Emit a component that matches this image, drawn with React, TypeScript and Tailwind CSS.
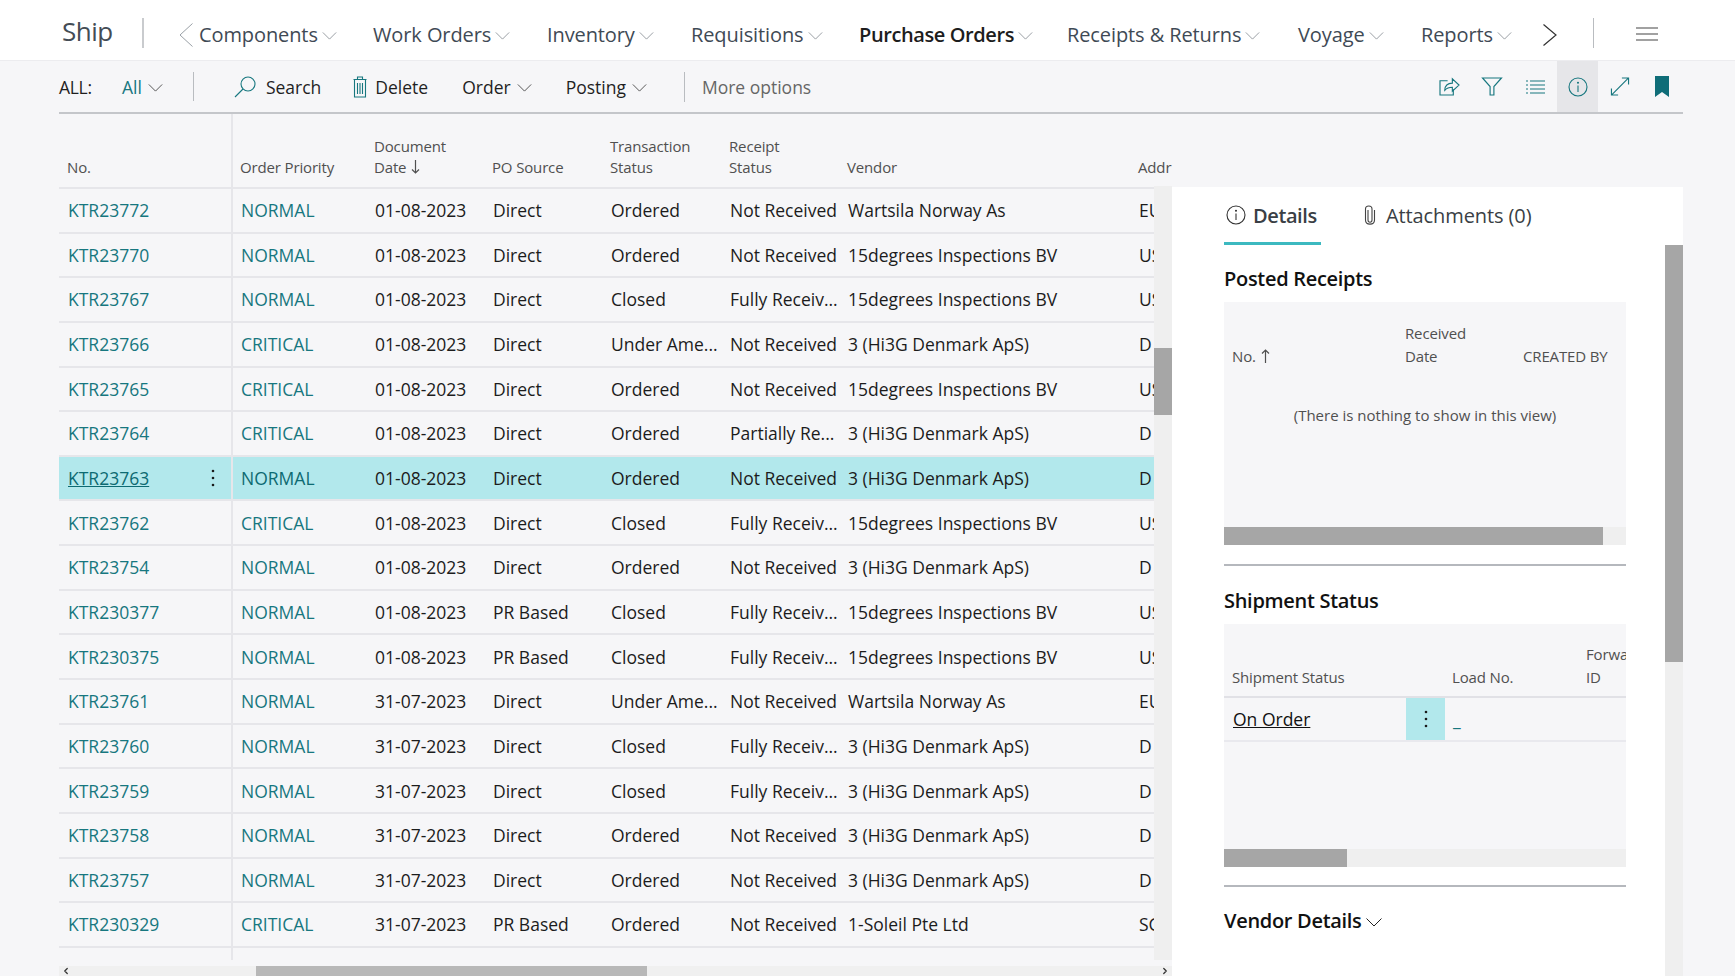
import { ChevronLeft, ChevronRight } from "lucide-react";

const TEAL = "text-[#17777f]";
const COLS = "grid grid-cols-[174px_134px_119px_118px_118px_118px_292px_1fr]";

const navItems = [
  { label: "Components", width: "w-[174px]" },
  { label: "Work Orders", width: "w-[174px]" },
  { label: "Inventory", width: "w-[144px]" },
  { label: "Requisitions", width: "w-[168px]" },
  { label: "Purchase Orders", width: "w-[208px]", active: true },
  { label: "Receipts & Returns", width: "w-[231px]" },
  { label: "Voyage", width: "w-[123px]" },
  { label: "Reports", width: "w-[122px]" },
];

const rows = [
  ["KTR23772", "NORMAL", "01-08-2023", "Direct", "Ordered", "Not Received", "Wartsila Norway As", "EU"],
  ["KTR23770", "NORMAL", "01-08-2023", "Direct", "Ordered", "Not Received", "15degrees Inspections BV", "US"],
  ["KTR23767", "NORMAL", "01-08-2023", "Direct", "Closed", "Fully Receiv...", "15degrees Inspections BV", "US"],
  ["KTR23766", "CRITICAL", "01-08-2023", "Direct", "Under Ame...", "Not Received", "3 (Hi3G Denmark ApS)", "D"],
  ["KTR23765", "CRITICAL", "01-08-2023", "Direct", "Ordered", "Not Received", "15degrees Inspections BV", "US"],
  ["KTR23764", "CRITICAL", "01-08-2023", "Direct", "Ordered", "Partially Re...", "3 (Hi3G Denmark ApS)", "D"],
  ["KTR23763", "NORMAL", "01-08-2023", "Direct", "Ordered", "Not Received", "3 (Hi3G Denmark ApS)", "D"],
  ["KTR23762", "CRITICAL", "01-08-2023", "Direct", "Closed", "Fully Receiv...", "15degrees Inspections BV", "US"],
  ["KTR23754", "NORMAL", "01-08-2023", "Direct", "Ordered", "Not Received", "3 (Hi3G Denmark ApS)", "D"],
  ["KTR230377", "NORMAL", "01-08-2023", "PR Based", "Closed", "Fully Receiv...", "15degrees Inspections BV", "US"],
  ["KTR230375", "NORMAL", "01-08-2023", "PR Based", "Closed", "Fully Receiv...", "15degrees Inspections BV", "US"],
  ["KTR23761", "NORMAL", "31-07-2023", "Direct", "Under Ame...", "Not Received", "Wartsila Norway As", "EU"],
  ["KTR23760", "NORMAL", "31-07-2023", "Direct", "Closed", "Fully Receiv...", "3 (Hi3G Denmark ApS)", "D"],
  ["KTR23759", "NORMAL", "31-07-2023", "Direct", "Closed", "Fully Receiv...", "3 (Hi3G Denmark ApS)", "D"],
  ["KTR23758", "NORMAL", "31-07-2023", "Direct", "Ordered", "Not Received", "3 (Hi3G Denmark ApS)", "D"],
  ["KTR23757", "NORMAL", "31-07-2023", "Direct", "Ordered", "Not Received", "3 (Hi3G Denmark ApS)", "D"],
  ["KTR230329", "CRITICAL", "31-07-2023", "PR Based", "Ordered", "Not Received", "1-Soleil Pte Ltd", "SG"],
];

function Chevron({ className = "" }: { className?: string }) {
  return (
    <svg viewBox="0 0 16 9" fill="none" stroke="currentColor" strokeWidth="1" className={className}>
      <path d="M0.5 0.5 8 8 15.5 0.5" />
    </svg>
  );
}

function SortArrow({ up = false }: { up?: boolean }) {
  return (
    <svg viewBox="0 0 9 14" fill="none" stroke="#505050" strokeWidth="1.2" className="w-[9px] h-[14px] inline-block ml-[5px] align-[-1px]">
      <path d={up ? "M4.5 14V1M1 4.5 4.5 1 8 4.5" : "M4.5 0v13M1 9.5 4.5 13 8 9.5"} />
    </svg>
  );
}

function Kebab() {
  return (
    <svg viewBox="0 0 4 18" className="w-[4px] h-[18px]" fill="#1a1a1a">
      <circle cx="2" cy="2" r="1.3" />
      <circle cx="2" cy="9" r="1.3" />
      <circle cx="2" cy="16" r="1.3" />
    </svg>
  );
}

function InfoIcon({ className = "" }: { className?: string }) {
  return (
    <svg viewBox="0 0 20 20" fill="none" stroke="currentColor" strokeWidth="1.1" className={className}>
      <circle cx="10" cy="10" r="9" />
      <path d="M10 8.500V15" />
      <circle cx="10" cy="5.800" r="0.500" />
    </svg>
  );
}

function Toolbar() {
  return (
    <div className="h-[51px] shrink-0 ml-[59px] mr-[52px] flex items-center text-[17.5px] text-[#1f1f1f] [&>span]:mt-[2px]">
      <span className="w-[63px] font-medium tracking-[-0.3px]">ALL:</span>
      <span className={`${TEAL} font-medium`}>All</span>
      <Chevron className="w-[15px] h-[8px] ml-[6px] mt-[2px] text-[#444]" />
      <div className="w-px h-[29px] bg-[#b9bcc0] ml-[30px] mr-[40px]" />
      <svg viewBox="0 0 22 22" fill="none" stroke="#17777f" strokeWidth="1.1" className="w-[22px] h-[22px]">
        <circle cx="14" cy="8" r="7" />
        <path d="M9 13 1 21" />
      </svg>
      <span className="ml-[10px]">Search</span>
      <svg viewBox="0 0 14 22" fill="none" stroke="#17777f" strokeWidth="1.1" className="w-[14px] h-[22px] ml-[32px]">
        <path d="M0.500 3.500h13M4.500 3.500V1h5v2.500M1.500 3.500V21h11V3.500M4.500 7v11M7 7v11M9.500 7v11" />
      </svg>
      <span className="ml-[8px]">Delete</span>
      <span className="ml-[34px]">Order</span>
      <Chevron className="w-[15px] h-[8px] ml-[6px] mt-[2px] text-[#444]" />
      <span className="ml-[34px]">Posting</span>
      <Chevron className="w-[15px] h-[8px] ml-[6px] mt-[2px] text-[#444]" />
      <div className="w-px h-[30px] bg-[#b9bcc0] ml-[37px] mr-[17px]" />
      <span className="text-[#666]">More options</span>

      <div className="ml-auto flex items-center h-full text-[#17777f]">
        <svg viewBox="0 0 22 20" fill="none" stroke="currentColor" strokeWidth="1.2" className="w-[21px] h-[19px] mr-[21px]">
          <path d="M9 4H1v15h14v-6" />
          <path d="M6 14c0-5 3-7.500 8-7.500V2l7 6.500-7 6.500v-4.200c-3 0-6 1-8 3.200z" />
        </svg>
        <svg viewBox="0 0 22 20" fill="none" stroke="currentColor" strokeWidth="1.2" className="w-[22px] h-[19px] mr-[23px]">
          <path d="M1 1h20l-8 9v9H9v-9z" />
        </svg>
        <svg viewBox="0 0 19 14" fill="none" stroke="currentColor" strokeWidth="1.2" className="w-[19px] h-[14px] mr-[12px]">
          <path d="M0 1h2M4 1h15M0 5h2M4 5h15M0 9h2M4 9h15M0 13h2M4 13h15" />
        </svg>
        <div className="w-[41px] h-full bg-[#e6e6e9] flex items-center justify-center">
          <InfoIcon className="w-[20px] h-[20px]" />
        </div>
        <svg viewBox="0 0 20 20" fill="none" stroke="currentColor" strokeWidth="1.2" className="w-[20px] h-[19px] ml-[12px] mr-[25px]">
          <path d="M1 19 19 1M12 1h7v7M1 12v7h7" />
        </svg>
        <svg viewBox="0 0 14 21" className="w-[14px] h-[21px] mr-[14px]" fill="#0f6d78">
          <path d="M0 0h14v21l-7-5-7 5z" />
        </svg>
      </div>
    </div>
  );
}

function GridTable() {
  return (
    <div className="w-[1113px] shrink-0 flex flex-col">
      <div className={`${COLS} h-[75px] text-[15px] leading-[21px] tracking-[-0.15px] text-[#505050]`}>
        <div className="flex items-end pb-[10px] pl-[8px] border-r-2 border-[#e6e6ea]">No.</div>
        <div className="flex items-end pb-[10px] pl-[7px]">Order Priority</div>
        <div className="flex items-end pb-[10px] pl-[7px]">
          <span>
            Document
            <br />
            Date
            <SortArrow />
          </span>
        </div>
        <div className="flex items-end pb-[10px] pl-[6px]">PO Source</div>
        <div className="flex items-end pb-[10px] pl-[6px]">
          <span>
            Transaction
            <br />
            Status
          </span>
        </div>
        <div className="flex items-end pb-[10px] pl-[7px]">
          <span>
            Receipt
            <br />
            Status
          </span>
        </div>
        <div className="flex items-end pb-[10px] pl-[7px]">Vendor</div>
        <div className="flex items-end pb-[10px] pl-[6px]">Addr</div>
      </div>

      <div className="flex h-[772px]">
        <div className="w-[1095px] overflow-hidden border-t-2 border-[#e6e6ea] -mt-[1px]">
          {rows.map((row) => {
            const selected = row[0] === "KTR23763";
            return (
              <div
                key={row[0]}
                className={`${COLS} h-[44.65px] items-stretch text-[17.5px] text-[#1c1c1c] border-b-2 border-[#e6e6ea] ${selected ? "bg-[#b2e8ec]" : ""}`}
              >
                <div className="flex items-center justify-between pl-[9px] pr-[16px] border-r-2 border-[#e6e6ea]">
                  <span className={selected ? "underline text-[#0d6a72]" : TEAL}>{row[0]}</span>
                  {selected && <Kebab />}
                </div>
                <div className={`flex items-center pl-[8px] ${selected ? "text-[#0d6a72]" : TEAL}`}>{row[1]}</div>
                <div className="flex items-center pl-[8px] whitespace-nowrap">{row[2]}</div>
                <div className="flex items-center pl-[7px] whitespace-nowrap">{row[3]}</div>
                <div className="flex items-center pl-[7px] whitespace-nowrap">{row[4]}</div>
                <div className="flex items-center pl-[8px] whitespace-nowrap">{row[5]}</div>
                <div className="flex items-center pl-[8px] whitespace-nowrap">{row[6]}</div>
                <div className="flex items-center pl-[7px] whitespace-nowrap">{row[7]}</div>
              </div>
            );
          })}
          <div className="h-[13px] ml-[172px] w-[2px] bg-[#e6e6ea]" />
        </div>
        <div className="w-[18px] h-[774px] -mt-[2px] bg-[#efefef]">
          <div className="w-full h-[67px] mt-[162px] bg-[#a6a6a6]" />
        </div>
      </div>

      <div className="h-[10px] mt-[6px] bg-[#f0f0f0] flex items-center">
        <ChevronLeft className="w-[10px] h-[10px] text-[#333] ml-[2px]" strokeWidth={3} />
        <div className="h-full w-[391px] ml-[185px] bg-[#b8b8b8]" />
        <ChevronRight className="w-[10px] h-[10px] text-[#333] ml-auto mr-[2px]" strokeWidth={3} />
      </div>
    </div>
  );
}

function DetailsPanel() {
  return (
    <div className="w-[511px] h-[789px] mt-[73px] bg-white flex">
      <div className="flex-1 pl-[52px] pr-[39px] min-w-0">
        <div className="flex h-[58px] text-[20px] tracking-[-0.1px] text-[#3a3f45]">
          <div className="w-[97px] h-[58px] border-b-[3px] border-[#3cb9c0] flex items-start pt-[17px] pl-[2px] font-semibold tracking-[-0.4px]">
            <InfoIcon className="w-[20px] h-[20px] mt-[1px] mr-[7px] text-[#333] shrink-0" />
            <span className="leading-[24px]">Details</span>
          </div>
          <div className="flex items-start pt-[17px] ml-[43px]">
            <svg viewBox="0 0 12 20" fill="none" stroke="#444" strokeWidth="1.1" className="w-[12px] h-[20px] mt-[1px] mr-[10px]">
              <path d="M4 5v10c0 3 4 3 4 0V4C8 0 1.500 0 1.500 4v11c0 5.500 9 5.500 9 0V5" />
            </svg>
            <span className="leading-[24px]">Attachments (0)</span>
          </div>
        </div>

        <h2 className="mt-[20px] h-[28px] text-[20px] leading-[28px] tracking-[-0.3px] font-semibold text-[#111]">Posted Receipts</h2>
        <div className="mt-[9px] h-[243px] bg-[#f6f6f8] flex flex-col">
          <div className="h-[67px] shrink-0 flex items-end text-[15px] leading-[23px] tracking-[-0.15px] text-[#505050]">
            <div className="w-[181px] pl-[8px] pb-[1px]">
              No.
              <SortArrow up />
            </div>
            <div className="w-[118px] pb-[1px]">
              Received
              <br />
              Date
            </div>
            <div className="pb-[1px] whitespace-nowrap">CREATED BY</div>
          </div>
          <div className="flex-1 text-center text-[15px] text-[#505050]">
            <div className="mt-[35px]">(There is nothing to show in this view)</div>
          </div>
          <div className="h-[18px] bg-[#efefef]">
            <div className="h-full w-[379px] bg-[#a6a6a6]" />
          </div>
        </div>
        <div className="mt-[19px] h-[2px] bg-[#b5b8bd]" />

        <h2 className="mt-[21px] h-[28px] text-[20px] leading-[28px] tracking-[-0.3px] font-semibold text-[#111]">Shipment Status</h2>
        <div className="mt-[9px] h-[243px] bg-[#f6f6f8] flex flex-col overflow-hidden">
          <div className="h-[74px] shrink-0 border-b-2 border-[#e1e1e6] flex items-end text-[15px] leading-[23px] tracking-[-0.15px] text-[#505050] pb-[7px]">
            <div className="w-[228px] pl-[8px] shrink-0">Shipment Status</div>
            <div className="w-[134px] shrink-0">Load No.</div>
            <div className="shrink-0 whitespace-nowrap">
              Forwarder
              <br />
              ID
            </div>
          </div>
          <div className="h-[44px] shrink-0 border-b-2 border-[#e9e9ee] flex text-[17.5px]">
            <div className="w-[182px] pl-[9px] flex items-center underline text-[#111]">On Order</div>
            <div className="w-[39px] bg-[#b2e8ec] flex items-center justify-center">
              <Kebab />
            </div>
            <div className={`pl-[8px] pt-[8px] text-[18px] ${TEAL} font-semibold`}>_</div>
          </div>
          <div className="flex-1" />
          <div className="h-[18px] bg-[#efefef]">
            <div className="h-full w-[123px] bg-[#a6a6a6]" />
          </div>
        </div>
        <div className="mt-[18px] h-[2px] bg-[#b5b8bd]" />

        <div className="mt-[20px] h-[28px] flex items-center text-[20px] tracking-[-0.3px] font-semibold text-[#111]">
          Vendor Details
          <Chevron className="w-[16px] h-[9px] ml-[4px] mt-[2px] text-[#222]" />
        </div>
      </div>
      <div className="w-[18px] mt-[58px] bg-[#efefef]">
        <div className="w-full h-[417px] bg-[#a6a6a6]" />
      </div>
    </div>
  );
}

export default function App() {
  return (
    <div className="w-[1735px] h-[976px] overflow-hidden bg-[#f6f6f8] flex flex-col font-['Open_Sans',sans-serif]">
      <header className="h-[61px] shrink-0 bg-white border-b border-[#ececef] flex items-center pl-[62px] pt-[6px] text-[#3f4a55]">
        <span className="w-[80px] text-[26px] tracking-[-0.5px] text-[#444c55] leading-none pb-[4px]">Ship</span>
        <div className="w-[2px] h-[30px] bg-[#c9cbce]" />
        <svg viewBox="0 0 14 24" fill="none" stroke="#9aa0a6" strokeWidth="1" className="w-[14px] h-[24px] ml-[35px] mr-[6px] mt-[3px]">
          <path d="M13.500 0.500 1 12l12.500 11.500" />
        </svg>
        {navItems.map((item) => (
          <div
            key={item.label}
            className={`${item.width} shrink-0 flex items-center text-[20px] tracking-[-0.1px] whitespace-nowrap mt-[4px] ${item.active ? "font-semibold tracking-[-0.4px] text-[#1d1d1d]" : ""}`}
          >
            {item.label}
            <Chevron className="w-[15px] h-[8px] ml-[4px] mt-[2px] text-[#8d9399]" />
          </div>
        ))}
        <svg viewBox="0 0 14 22" fill="none" stroke="#333" strokeWidth="1.2" className="w-[14px] h-[22px] mt-[3px]">
          <path d="M0.500 0.500 13 11 0.500 21.500" />
        </svg>
        <div className="w-px h-[30px] bg-[#b9bcc0] ml-[36px]" />
        <svg viewBox="0 0 22 14" fill="none" stroke="#444" strokeWidth="1.2" className="w-[22px] h-[14px] ml-[42px] mt-[2px]">
          <path d="M0 1h22M0 7h22M0 13h22" />
        </svg>
      </header>
      <Toolbar />
      <div className="h-[2px] ml-[59px] mr-[52px] bg-[#c4c6ca] shrink-0" />
      <main className="flex pl-[59px] flex-1 min-h-0">
        <GridTable />
        <DetailsPanel />
      </main>
    </div>
  );
}
